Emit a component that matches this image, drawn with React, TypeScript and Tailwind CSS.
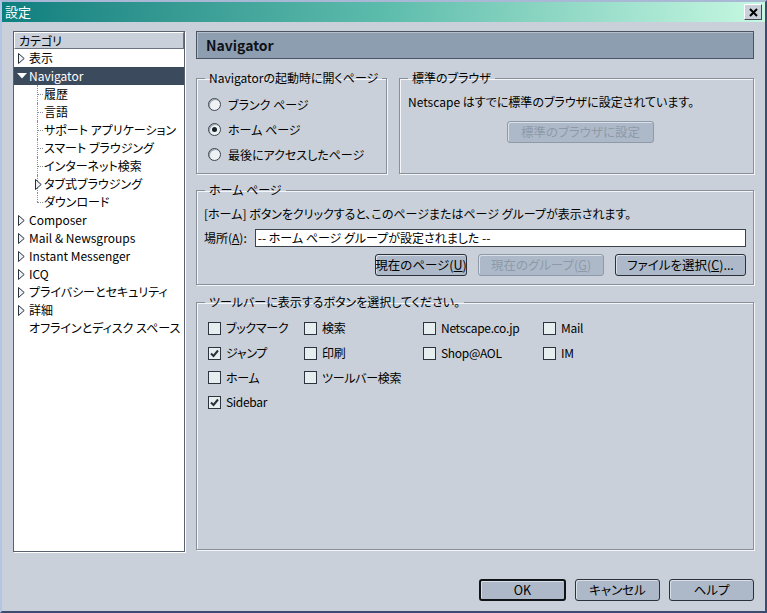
import React from 'react';

const font = "font-['Noto_Sans_CJK_JP','Noto_Sans_CJK_SC',sans-serif] [font-feature-settings:'palt']";

function TriRight() {
    return (
        <svg width="7" height="11" viewBox="0 0 7 11" className="shrink-0">
            <polygon points="0.5,0.5 6.2,5.5 0.5,10.5" fill="#eef2f6" stroke="#28303a" strokeWidth="1" />
        </svg>
    );
}

function TriDown() {
    return (
        <svg width="10" height="6" viewBox="0 0 10 6" className="shrink-0">
            <polygon points="0,0 10,0 5,5.5" fill="#ffffff" />
        </svg>
    );
}

interface TreeItem {
    label: string;
    level: 0 | 1;
    expandable?: boolean;
    selected?: boolean;
    last?: boolean;
}

const tree: TreeItem[] = [
    { label: '表示', level: 0, expandable: true },
    { label: 'Navigator', level: 0, expandable: true, selected: true },
    { label: '履歴', level: 1 },
    { label: '言語', level: 1 },
    { label: 'サポート アプリケーション', level: 1 },
    { label: 'スマート ブラウジング', level: 1 },
    { label: 'インターネット検索', level: 1 },
    { label: 'タブ式ブラウジング', level: 1, expandable: true },
    { label: 'ダウンロード', level: 1, last: true },
    { label: 'Composer', level: 0, expandable: true },
    { label: 'Mail & Newsgroups', level: 0, expandable: true },
    { label: 'Instant Messenger', level: 0, expandable: true },
    { label: 'ICQ', level: 0, expandable: true },
    { label: 'プライバシーとセキュリティ', level: 0, expandable: true },
    { label: '詳細', level: 0, expandable: true },
    { label: 'オフラインとディスク スペース', level: 0 },
];

function TreeRow({ item }: { item: TreeItem }) {
    if (item.selected) {
        return (
            <div className="h-[18px] flex items-center bg-[#3c4a5d] text-white pl-[3px] gap-[2px]">
                <TriDown />
                <span className="leading-[18px]">{item.label}</span>
            </div>
        );
    }
    if (item.level === 0) {
        return (
            <div className="h-[18px] flex items-center pl-[4px]">
                <div className="w-[11px] shrink-0">{item.expandable && <TriRight />}</div>
                <span className="leading-[18px]">{item.label}</span>
            </div>
        );
    }
    return (
        <div className="h-[18px] flex items-center pl-[23px]">
            <div className="w-[7px] h-[18px] shrink-0 relative">
                <div className={`absolute left-0 top-0 border-l border-dotted border-[#8890a0] ${item.last ? 'h-[9px]' : 'h-[18px]'}`} />
                {item.expandable ? (
                    <div className="absolute -left-[2px] top-[4px]"><TriRight /></div>
                ) : (
                    <div className="absolute left-0 top-[9px] w-[6px] border-t border-dotted border-[#8890a0]" />
                )}
            </div>
            <span className="leading-[18px]">{item.label}</span>
        </div>
    );
}

function Radio({ checked, label }: { checked?: boolean; label: string }) {
    return (
        <div className="h-[25px] flex items-center gap-[7px]">
            <div className="w-[13px] h-[13px] rounded-full border border-[#3c444e] bg-[#eef2f5] flex items-center justify-center shadow-[inset_1px_1px_0_#9aa4ae]">
                {checked && <div className="w-[5px] h-[5px] rounded-full bg-[#1a2028]" />}
            </div>
            <span>{label}</span>
        </div>
    );
}

function Check({ checked, label }: { checked?: boolean; label: string }) {
    return (
        <div className="h-[24.7px] flex items-center gap-[5px]">
            <div className="w-[13px] h-[13px] border border-[#2c343e] bg-[#e6eef0] shrink-0 flex items-center justify-center">
                {checked && (
                    <svg width="11" height="11" viewBox="0 0 11 11">
                        <path d="M2 5.5 L4.5 8 L9 2.5" fill="none" stroke="#28323e" strokeWidth="2" />
                    </svg>
                )}
            </div>
            <span className="tracking-[-0.3px]">{label}</span>
        </div>
    );
}

function Btn({ children, disabled, def, w }: { children: React.ReactNode; disabled?: boolean; def?: boolean; w: string }) {
    return (
        <div
            className={`${w} h-[22px] rounded-[3px] flex items-center justify-center whitespace-nowrap bg-[#adb9c8] ${def ? 'border-2 border-[#101418]' : disabled ? 'border border-[#8e9aa8] text-[#8d99a8]' : 'border border-[#2c3038]'} shadow-[inset_1px_1px_0_#d8e0e8]`}
        >
            <span className="text-[12.5px] leading-[18px]">{children}</span>
        </div>
    );
}

function Group({ title, className, inner, children }: { title: string; className: string; inner: string; children: React.ReactNode }) {
    return (
        <fieldset className={`min-w-0 p-0 border border-[#878f9a] shadow-[1px_1px_0_#f4f6f8,inset_1px_1px_0_#f4f6f8] ${className}`}>
            <legend className="ml-[8px] px-[4px] h-[14px] leading-[14px] whitespace-nowrap">{title}</legend>
            <div className={inner}>{children}</div>
        </fieldset>
    );
}

export default function App() {
    return (
        <div className={`w-[767px] h-[613px] overflow-hidden bg-[#c9d0d9] border-2 border-t-[#a9b8d4] border-l-[#b4c4e4] border-r-[#3c4c70] border-b-[#3c4c70] flex flex-col text-[12px] text-black ${font}`}>
            {/* Title bar */}
            <div className="h-[20px] shrink-0 bg-gradient-to-r from-[#0b7f7f] via-[#5cbcac] to-[#c6f8e2] flex items-center justify-between pl-[3px] pr-[3px]">
                <span className="text-white text-[13px] leading-[20px]">設定</span>
                <div className="w-[18px] h-[16px] bg-[#c9d0d9] border border-t-white border-l-white border-r-[#404850] border-b-[#404850] flex items-center justify-center">
                    <svg width="9" height="9" viewBox="0 0 9 9">
                        <path d="M1 1 L8 8 M8 1 L1 8" stroke="#000" strokeWidth="2" />
                    </svg>
                </div>
            </div>

            {/* Body */}
            <div className="flex pl-[11px] pt-[9px] gap-[11px]">
                {/* Tree */}
                <div className="w-[172px] h-[521px] bg-white border border-[#5a626e] shadow-[1px_1px_0_#ffffff] flex flex-col">
                    <div className="h-[17px] bg-[#c9d0d9] border border-t-white border-l-white border-r-[#6a7280] border-b-[#6a7280] pl-[4px] leading-[15px]">
                        カテゴリ
                    </div>
                    {tree.map((item, i) => (
                        <TreeRow key={i} item={item} />
                    ))}
                </div>

                {/* Right column */}
                <div className="w-[558px] flex flex-col">
                    <div className="h-[28px] bg-[#8e9eb1] border border-[#4a5462] shadow-[inset_1px_1px_0_#b4c0cc] flex items-center pl-[9px]">
                        <span className="font-bold text-[14px] text-[#0e1218]">Navigator</span>
                    </div>

                    <div className="flex gap-[12px] mt-[12px]">
                        <Group title="Navigatorの起動時に開くページ" className="w-[191px] h-[103px]" inner="pl-[11px] pt-[7px]">
                            <Radio label="ブランク ページ" />
                            <Radio label="ホーム ページ" checked />
                            <Radio label="最後にアクセスしたページ" />
                        </Group>
                        <Group title="標準のブラウザ" className="flex-1 h-[103px]" inner="pl-[8px] pt-[8px]">
                            <div className="h-[18px] leading-[18px]">Netscape はすでに標準のブラウザに設定されています。</div>
                            <div className="flex justify-center mt-[10px]">
                                <Btn disabled w="w-[147px]">標準のブラウザに設定</Btn>
                            </div>
                        </Group>
                    </div>

                    <Group title="ホーム ページ" className="mt-[9px] h-[102px]" inner="pl-[7px] pr-[7px] pt-[8px]">
                        <div className="h-[18px] leading-[18px]">[ホーム] ボタンをクリックすると、このページまたはページ グループが表示されます。</div>
                        <div className="flex items-center mt-[6px] gap-[8px]">
                            <span>場所(<span className="underline">A</span>):</span>
                            <div className="flex-1 h-[18px] bg-white border border-[#3a424c] pl-[2px] leading-[16px]">
                                -- ホーム ページ グループが設定されました --
                            </div>
                        </div>
                        <div className="flex justify-end gap-[11px] mt-[7px]">
                            <Btn w="w-[92px]">現在のページ(<span className="underline">U</span>)</Btn>
                            <Btn disabled w="w-[126px]">現在のグループ(<span className="underline">G</span>)</Btn>
                            <Btn w="w-[131px]">ファイルを選択(<span className="underline">C</span>)...</Btn>
                        </div>
                    </Group>

                    <Group title="ツールバーに表示するボタンを選択してください。" className="mt-[10px] h-[255px]" inner="pl-[11px] pt-[7px]">
                        <div className="grid grid-cols-[96px_119px_120px_100px]">
                            <Check label="ブックマーク" />
                            <Check label="検索" />
                            <Check label="Netscape.co.jp" />
                            <Check label="Mail" />
                            <Check label="ジャンプ" checked />
                            <Check label="印刷" />
                            <Check label="Shop@AOL" />
                            <Check label="IM" />
                            <Check label="ホーム" />
                            <Check label="ツールバー検索" />
                            <div />
                            <div />
                            <Check label="Sidebar" checked />
                        </div>
                    </Group>
                </div>
            </div>

            {/* Bottom buttons */}
            <div className="flex justify-end gap-[9px] pr-[11px] mt-[27px]">
                <Btn def w="w-[87px]">OK</Btn>
                <Btn w="w-[85px]">キャンセル</Btn>
                <Btn w="w-[85px]">ヘルプ</Btn>
            </div>
        </div>
    );
}
